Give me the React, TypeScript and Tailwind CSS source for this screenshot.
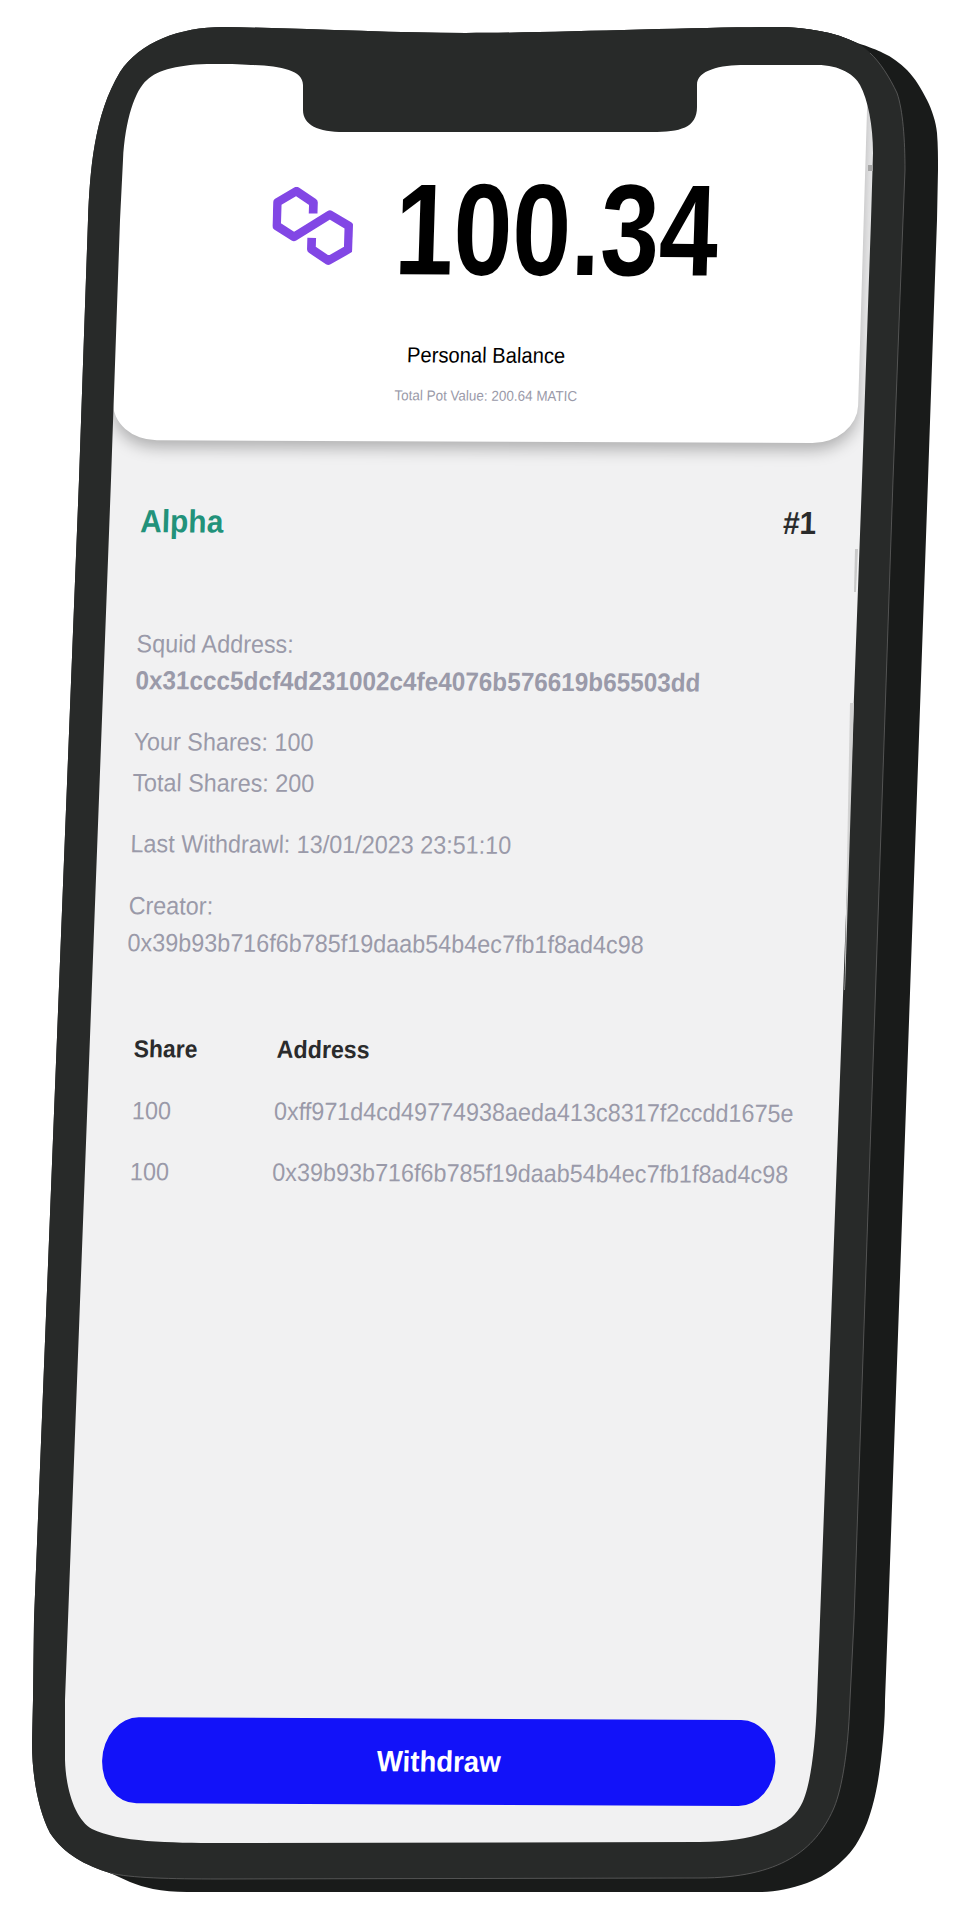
import React from "react";

const FRONT =
  "M223 27C300 28 390 33 466 33C550 33 700 27 777 27C805 27 835 32 857 43C872 51 888 72 897 93C903 110 905 140 905 170L903 220L893 480L854 1620L850 1700C848 1760 840 1795 833 1810C815 1850 780 1878 700 1878L220 1879C170 1879 130 1878 110 1873C85 1865 65 1855 50 1833C38 1810 32 1775 32 1743L33 1700L34 1620L79 480L88 220C90 170 94 115 120 72C140 42 180 27 223 27Z";
const HOLE =
  "M213 64C225 64 240 64 251 65C280 66 303 70 303 85L303 110C303 125 318 132 344 132L652 132C680 132 697 128 697 107L697 85C697 70 720 65 745 65L817 65C840 65 855 75 860 85C868 100 873 125 873 153L871 220L862 480L820 1620L817 1700C815 1760 808 1795 800 1807C790 1825 760 1842 700 1842L220 1843C170 1843 118 1842 92 1829C76 1820 66 1792 65 1760L65 1700L68 1620L111 480L120 220L123 160C125 120 135 90 147 80C157 70 180 64 213 64Z";
const BACK =
  "M700 30L777 27C805 27 835 32 857 43C870 47 877 50 883 53C892 57 900 63 907 70C915 78 922 90 927 100C932 110 936 122 937 133C938 145 938 158 938 170L937 220L928 480L888 1620L885 1700C885 1720 883 1745 880 1767C877 1790 873 1807 867 1823C860 1840 852 1852 843 1860C832 1871 820 1878 807 1883C790 1889 775 1892 760 1892L187 1892C175 1892 163 1891 153 1889C145 1887 137 1885 130 1882L108 1872L300 1500Z";
const HAIRLINE =
  "M870 53C880 62 890 78 897 93C903 110 905 140 905 170L903 220L893 480L854 1620L850 1700C848 1760 840 1795 833 1810C815 1850 780 1878 700 1878L220 1879C170 1879 130 1878 110 1873";

function PolygonLogo() {
  return (
    <svg width="86" height="78" viewBox="100 75 240 234" fill="none" preserveAspectRatio="none" className="mb-[6px] ml-[5px] shrink-0">
      <path
        d="M220 155V122L168 88L112 122V192L165 225L270 158L328 192V262L270 296L218 262V228"
        stroke="#8247e5"
        strokeWidth="26"
        strokeLinejoin="round"
      />
    </svg>
  );
}

function Line({ className, children }: { className?: string; children: React.ReactNode }) {
  return <p className={`h-[30px] text-[25px] leading-[30px] text-[#9a9aa9] whitespace-nowrap ${className ?? ""}`}>{children}</p>;
}

export default function App() {
  return (
    <div className="relative w-[970px] h-[1920px] overflow-hidden bg-white font-['Liberation_Sans',Arial,sans-serif]">
      <svg className="absolute inset-0" width="970" height="1920" viewBox="0 0 970 1920">
        <path d={BACK} fill="#191b1a" />
        <path d={FRONT} fill="#282a29" />
      </svg>

      <div className="absolute left-0 top-0 flex h-[1800px] w-[830px] origin-top-left flex-col overflow-hidden rounded-[80px] bg-[#f1f1f2] [transform:matrix(0.935,0.004,-0.03,1,112,60)]">
        <div className="ml-[12px] flex h-[380px] w-[797px] shrink-0 flex-col items-center rounded-bl-[48px_38px] rounded-br-[48px_38px] bg-white pt-[103px] shadow-[0_7px_16px_rgba(0,0,0,0.28)]">
          <div className="flex h-[130px] items-center gap-[50px]">
            <PolygonLogo />
            <div className="flex w-[336px] justify-center">
              <span className="origin-center scale-x-[0.87] text-[130px] font-bold leading-none text-black">100.34</span>
            </div>
          </div>
          <p className="mr-[2px] mt-[49px] text-[21.6px] leading-[24px] text-black">Personal Balance</p>
          <p className="mt-[18px] text-[14.4px] leading-[20px] text-[#9a9aa9]">Total Pot Value: 200.64 MATIC</p>
        </div>

        <div className="mt-[61px] flex h-10 items-center justify-between pl-[45px] pr-[62px] text-[32px] font-bold">
          <span className="text-[#22927a]">Alpha</span>
          <span className="mb-[2px] text-[#2a2b2c]">#1</span>
        </div>

        <div className="mt-[87px] pl-[45px]">
          <Line>Squid Address:</Line>
          <Line className="mt-[7px] text-[26px] font-bold">0x31ccc5dcf4d231002c4fe4076b576619b65503dd</Line>
          <Line className="mt-[31px]">Your Shares: 100</Line>
          <Line className="mt-[11px]">Total Shares: 200</Line>
          <Line className="mt-[31px]">Last Withdrawl: 13/01/2023 23:51:10</Line>
          <Line className="mt-[32px]">Creator:</Line>
          <Line className="mt-[7px]">0x39b93b716f6b785f19daab54b4ec7fb1f8ad4c98</Line>
        </div>

        <div className="mt-[77px] grid grid-cols-[152px_1fr] gap-y-[31px] pl-[55px]">
          <span className="text-[24.5px] font-bold leading-[30px] text-[#2a2b2c]">Share</span>
          <span className="ml-[1px] text-[24.8px] font-bold leading-[30px] text-[#2a2b2c]">Address</span>
          <Line>100</Line>
          <Line>0xff971d4cd49774938aeda413c8317f2ccdd1675e</Line>
          <Line>100</Line>
          <Line>0x39b93b716f6b785f19daab54b4ec7fb1f8ad4c98</Line>
        </div>

        <div className="mt-auto pb-[57px] pl-[44px] pr-[66px]">
          <button className="flex h-[86px] w-full items-center justify-center rounded-[38px/43px] bg-[#1212f9] text-[29.5px] font-bold text-white">
            Withdraw
          </button>
        </div>
      </div>

      <svg className="pointer-events-none absolute inset-0" width="970" height="1920" viewBox="0 0 970 1920">
        <path d={FRONT + HOLE} fill="#282a29" fillRule="evenodd" />
        <path d={HAIRLINE} stroke="#5f605f" strokeWidth="0.8" fill="none" />
        <path d="M868 165L873 165L873 171L868 171Z" fill="#a5a5a5" />
        <path d="M855 549L858 549L856 592L854 592Z" fill="#c9c9c9" />
        <path d="M850 703L854 703L845 990L844.5 990Z" fill="#d2d2d2" />
      </svg>
    </div>
  );
}
